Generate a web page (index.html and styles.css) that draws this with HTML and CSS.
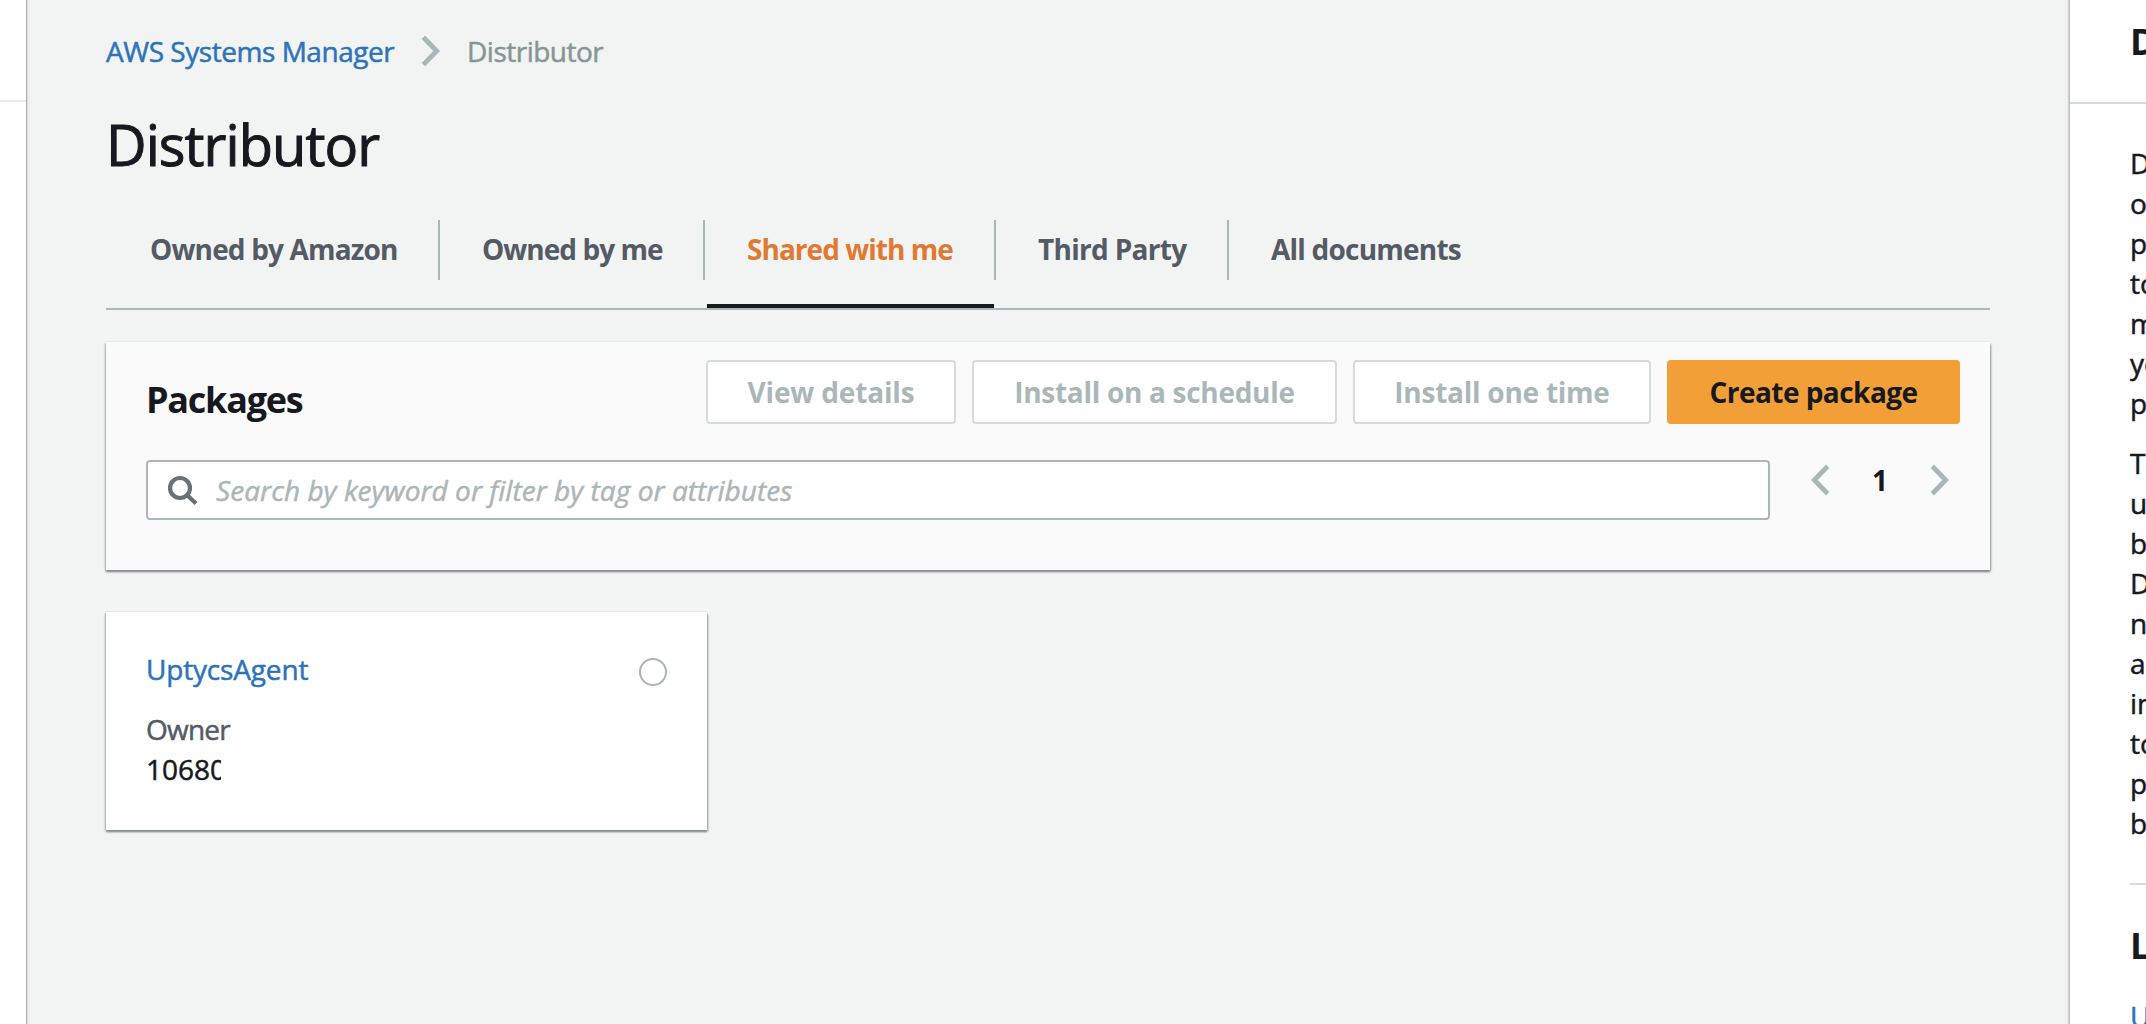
FILE: index.html
```html
<!DOCTYPE html>
<html lang="en">
<head>
<meta charset="utf-8">
<title>Distributor</title>
<link rel="stylesheet" href="styles.css">
</head>
<body>
<aside class="nav"><div class="nav-head"></div></aside>
<main class="main">
  <nav class="crumbs">
    <a class="crumb-link" href="#">AWS Systems Manager</a>
    <svg class="chevron" width="20" height="32" viewBox="0 0 20 32"><path d="M2.3 2.3L15.7 16L2.3 29.7"/></svg>
    <span class="crumb-current">Distributor</span>
  </nav>
  <h1 class="title">Distributor</h1>
  <ul class="tabs">
    <li class="tab tab-amazon">Owned by Amazon</li>
    <li class="tab tab-mine">Owned by me</li>
    <li class="tab tab-shared active">Shared with me</li>
    <li class="tab tab-third">Third Party</li>
    <li class="tab tab-all">All documents</li>
  </ul>
  <section class="panel">
    <div class="panel-head">
      <h2 class="panel-title">Packages</h2>
      <div class="actions">
        <button class="btn btn-view" disabled>View details</button>
        <button class="btn btn-schedule" disabled>Install on a schedule</button>
        <button class="btn btn-once" disabled>Install one time</button>
        <button class="btn primary">Create package</button>
      </div>
    </div>
    <div class="filters">
      <div class="search">
        <svg class="search-icon" width="32" height="32" viewBox="0 0 32 32"><circle cx="13" cy="14" r="10"/><path d="M20 21L29 29.6"/></svg>
        <span class="placeholder">Search by keyword or filter by tag or attributes</span>
      </div>
      <div class="pager">
        <svg class="chevron" width="20" height="32" viewBox="0 0 20 32"><path d="M18.7 2.3L5.3 16L18.7 29.7"/></svg>
        <span class="page">1</span>
        <svg class="chevron" width="20" height="32" viewBox="0 0 20 32"><path d="M1.3 2.3L14.7 16L1.3 29.7"/></svg>
      </div>
    </div>
  </section>
  <article class="card">
    <div class="card-head">
      <a class="card-link" href="#">UptycsAgent</a>
      <span class="radio"></span>
    </div>
    <div class="label">Owner</div>
    <div class="value">10680</div>
  </article>
</main>
<aside class="help">
  <h2 class="help-title">D</h2>
  <div class="help-body">
    <p>D<br>o<br>p<br>to<br>m<br>yo<br>p</p>
    <p>To<br>u<br>b<br>D<br>n<br>a<br>in<br>to<br>p<br>b</p>
    <h3 class="learn">L</h3>
    <a class="learn-link" href="#">U</a>
  </div>
</aside>
</body>
</html>
```
FILE: styles.css
```css
* { box-sizing: border-box; margin: 0; padding: 0; }
body {
  display: flex;
  height: 1024px;
  overflow: hidden;
  background: #f2f4f3;
  color: #16191f;
  font: 28px/40px "Open Sans", "Noto Sans", sans-serif;
  white-space: nowrap;
  -webkit-text-stroke: 0.5px currentColor;
}
a { color: #2e73b8; text-decoration: none; }

.nav { flex: 0 0 26px; background: #fff; box-shadow: 1px 0 1px #aab2b2, 2px 0 2px #dce0e0; }
.nav-head { height: 102px; border-bottom: 2px solid #eaeded; }

.main { flex: 1; padding: 31px 79px 0 80px; }

.crumbs { display: flex; align-items: center; height: 40px; }
.crumb-link { width: 315px; letter-spacing: -0.46px; }
.crumb-current { margin-left: 26px; color: #879596; letter-spacing: -0.5px; }
.chevron { fill: none; stroke: #aab7b8; stroke-width: 4.8; }

.title { margin-top: 41px; font-size: 56px; line-height: 64px; font-weight: 400; letter-spacing: -0.95px; -webkit-text-stroke: 1px #16191f; }

.tabs { display: flex; margin-top: 44px; border-bottom: 2px solid #aab7b8; list-style: none; }
.tab {
  position: relative;
  height: 88px;
  margin-right: 4px;
  padding-top: 9px;
  color: #545b64;
  font-weight: 700;
  -webkit-text-stroke: 0;
}
.tab:not(:last-child)::after {
  content: "";
  position: absolute;
  top: 0;
  right: -2px;
  width: 2px;
  height: 60px;
  background: #aab7b8;
}
.tab-amazon { width: 332px; padding-left: 44px; letter-spacing: -0.84px; }
.tab-mine { width: 261px; padding-left: 40px; letter-spacing: -0.96px; }
.tab-shared { width: 287px; padding-left: 40px; letter-spacing: -0.96px; }
.tab-third { width: 229px; padding-left: 40px; letter-spacing: -0.7px; }
.tab-all { padding-left: 40px; letter-spacing: -0.78px; }
.tab.active { border-bottom: 4px solid #16191f; color: #e07932; }

.panel, .card { box-shadow: 0 2px 2px #7f8b8f, 2px 2px 2px -1px #a3adb0, -1px 1px 2px #c0c8c9, 0 -1px 0 #eaeded; }
.panel { height: 228px; margin-top: 32px; padding: 18px 30px 0 40px; background: #fafafa; }
.panel-head { display: flex; justify-content: space-between; height: 64px; }
.panel-title { margin-top: 18px; font-size: 36px; line-height: 44px; letter-spacing: -1.25px; -webkit-text-stroke: 0; }
.actions { display: flex; gap: 16px; }
.btn {
  height: 64px;
  border: 2px solid #d5dbdb;
  border-radius: 4px;
  background: #fff;
  color: #aab7b8;
  font: 700 28px/40px "Open Sans", "Noto Sans", sans-serif;
  -webkit-text-stroke: 0;
}
.btn-view { width: 250px; letter-spacing: -0.17px; }
.btn-schedule { width: 365px; letter-spacing: -0.3px; }
.btn-once { width: 298px; letter-spacing: -0.25px; }
.btn.primary { width: 293px; border-color: #f29f38; background: #f29f38; color: #16191f; letter-spacing: -0.54px; }

.filters { display: flex; margin-top: 36px; }
.search { display: flex; align-items: center; width: 1624px; height: 60px; border: 2px solid #aab7b8; border-radius: 4px; background: #fff; }
.search-icon { margin-left: 19px; fill: none; stroke: #687078; stroke-width: 4.2; }
.placeholder { margin-left: 17px; color: #aab7b8; font-style: italic; letter-spacing: 0.05px; }
.pager { display: flex; align-items: center; gap: 43px; height: 40px; margin-left: 39px; }
.page { width: 16px; font-weight: 700; text-align: center; -webkit-text-stroke: 0; }

.card { width: 601px; height: 218px; margin: 42px 0 0; padding: 37px 40px 0; background: #fff; }
.card-head { display: flex; justify-content: space-between; align-items: center; height: 40px; }
.card-link { letter-spacing: -0.17px; }
.radio { width: 28px; height: 28px; margin-top: 6px; border: 2px solid #aab7b8; border-radius: 50%; }
.label { margin-top: 20px; color: #545b64; letter-spacing: -0.8px; }
.value { width: 75px; overflow: hidden; }

.help { flex: 0 0 77px; overflow: hidden; border-left: 1px solid #bcc2c3; background: #fff; box-shadow: -1px 0 1px #ccd1d1; }
.help-title { height: 104px; padding: 20px 0 0 60px; border-bottom: 2px solid #d5dbdb; font-size: 36px; line-height: 44px; -webkit-text-stroke: 0; }
.help-body { padding: 39px 0 0 60px; }
.help-body p + p { margin-top: 20px; }
.learn { margin-top: 40px; border-top: 2px solid #d5dbdb; padding-top: 39px; font-size: 36px; line-height: 44px; -webkit-text-stroke: 0; }
.learn-link { display: block; margin-top: 28px; }
```
